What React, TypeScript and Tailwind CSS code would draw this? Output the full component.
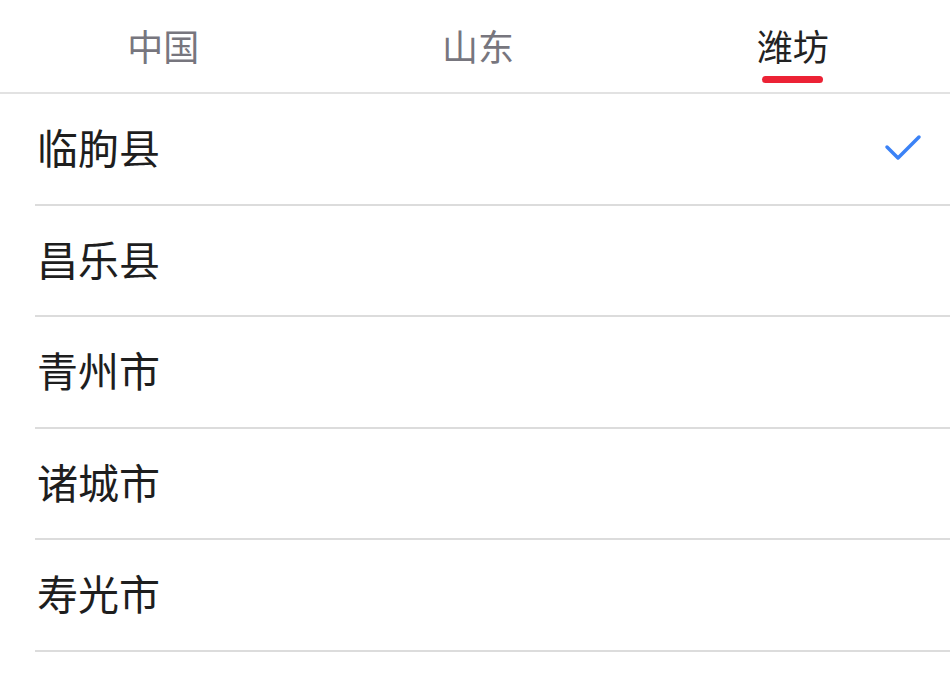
const tabs = ['中国', '山东', '潍坊']
const items = ['临朐县', '昌乐县', '青州市', '诸城市', '寿光市']

function Check() {
  return (
    <svg width="40" height="32" viewBox="0 0 40 32" fill="none">
      <path d="M3 14 L14 25 L35 4" stroke="#3b82f6" strokeWidth="3.5" strokeLinecap="round" strokeLinejoin="round" />
    </svg>
  )
}

export default function App() {
  const active = 2
  const selected = 0
  return (
    <div
      className="w-[950px] h-[676px] bg-white overflow-hidden"
      style={{ fontFamily: '"Noto Sans CJK SC", "Noto Sans", sans-serif' }}
    >
      <div className="flex h-[94px] border-b-2 border-[#e2e2e2] pl-[6px]">
        {tabs.map((t, i) => (
          <div key={t} className="flex-1 flex flex-col items-center justify-center relative">
            <span
              className={`text-[36px] leading-none -mt-[2px] ${i === active ? 'text-[#222222]' : 'text-[#77767e]'}`}
            >
              {t}
            </span>
            {i === active && (
              <div className="absolute top-[76px] w-[61px] h-[7px] rounded-full bg-[#ec2235]" />
            )}
          </div>
        ))}
      </div>
      <div className="pl-[35px]">
        {items.map((name, i) => (
          <div
            key={name}
            className="h-[111.5px] flex items-center justify-between border-b-2 border-[#dcdcdc] pr-[26px]"
          >
            <span className="pl-[2px] text-[41px] leading-none text-[#1e1e1e] -mt-[4px]">{name}</span>
            {i === selected && <Check />}
          </div>
        ))}
      </div>
    </div>
  )
}
